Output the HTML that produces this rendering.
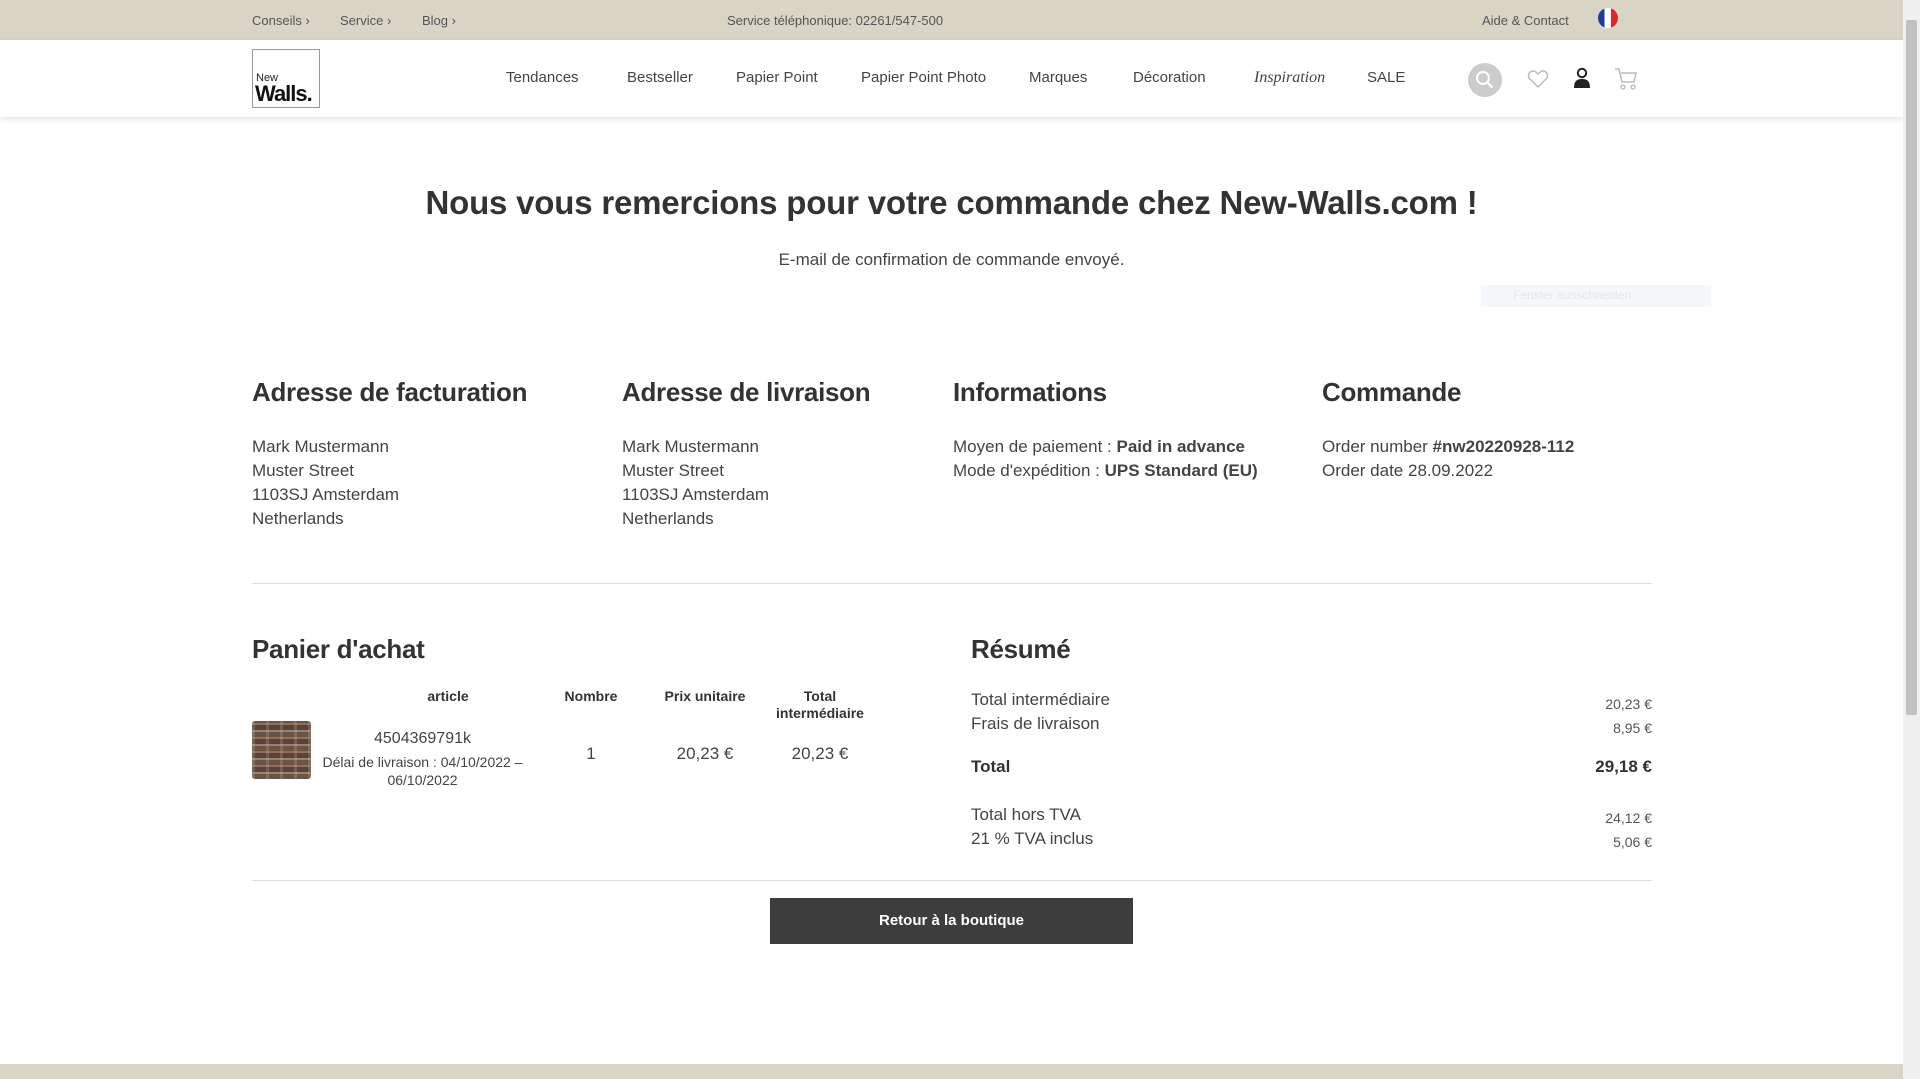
<!DOCTYPE html>
<html><head><meta charset="utf-8"><style>
*{margin:0;padding:0;box-sizing:border-box}
body{width:1920px;height:1079px;overflow:hidden;position:relative;background:#fff;font-family:"Liberation Sans",sans-serif;color:#333}
.a{position:absolute;white-space:nowrap}
.tb{position:absolute;left:0;top:0;width:1903px;height:40px;background:#d8d5c7}
.tb .a{font-size:13px;color:#555;top:13px}
.hd{position:absolute;left:0;top:40px;width:1903px;height:77px;background:#fff;box-shadow:0 2px 6px rgba(0,0,0,.12)}
.nav{font-size:15px;color:#444;top:69px}
.h2{font-size:26px;font-weight:bold;color:#333;letter-spacing:-0.3px}
.t{font-size:17px;color:#444;line-height:24px}
.th{font-size:14px;font-weight:bold;color:#333;text-align:center;line-height:17px}
.c{text-align:center}
.r{text-align:right}
.sb{position:absolute;left:1903px;top:0;width:17px;height:1079px;background:#f0f0f0}
</style></head><body>
<div class="tb">
<div class="a" style="left:252px">Conseils &#8250;</div>
<div class="a" style="left:340px">Service &#8250;</div>
<div class="a" style="left:422px">Blog &#8250;</div>
<div class="a" style="left:727px">Service téléphonique: 02261/547-500</div>
<div class="a" style="left:1482px">Aide &amp; Contact</div>
<div class="a" style="left:1598px;top:8px;width:20px;height:20px;border-radius:50%;overflow:hidden;background:linear-gradient(90deg,#1f3c9a 0 33%,#fff 33% 66%,#e0262b 66%)"></div>
</div>
<div class="hd"></div>
<div class="a" style="left:252px;top:49px;width:68px;height:59px;border:1px solid #999;background:#fff">
<div class="a" style="left:3px;top:22px;font-size:11px;color:#222">New</div>
<div class="a" style="left:2px;top:31px;font-size:22px;font-weight:bold;color:#111;letter-spacing:-1px">Walls.</div>
</div>
<div class="a nav" style="left:506px">Tendances</div>
<div class="a nav" style="left:627px">Bestseller</div>
<div class="a nav" style="left:736px">Papier Point</div>
<div class="a nav" style="left:861px">Papier Point Photo</div>
<div class="a nav" style="left:1029px">Marques</div>
<div class="a nav" style="left:1133px">Décoration</div>
<div class="a nav" style="left:1254px;font-family:'Liberation Serif',serif;font-style:italic;font-size:16px">Inspiration</div>
<div class="a nav" style="left:1367px">SALE</div>
<svg class="a" style="left:1467px;top:62px" width="36" height="36"><circle cx="18" cy="18" r="17" fill="#ccc"/><circle cx="16" cy="16" r="6" fill="none" stroke="#fff" stroke-width="2"/><path d="M20.5 20.5l5 5" stroke="#fff" stroke-width="2.2"/></svg>
<svg class="a" style="left:1527px;top:69px" width="22" height="20"><path d="M11 18L3 10C0 7 2 2 6 2c2.5 0 4 2 5 3 1-1 2.5-3 5-3 4 0 6 5 3 8z" fill="none" stroke="#bbb" stroke-width="1.5"/></svg>
<svg class="a" style="left:1572px;top:67px" width="20" height="22"><circle cx="10" cy="6" r="4.2" fill="none" stroke="#222" stroke-width="2"/><path d="M2 21c0-7 3-9 8-9s8 2 8 9z" fill="#222"/></svg>
<svg class="a" style="left:1614px;top:67px" width="26" height="24"><path d="M1 2h4l3 13h12l2-9H7" fill="none" stroke="#bbb" stroke-width="1.6"/><circle cx="9" cy="20" r="2" fill="none" stroke="#bbb" stroke-width="1.4"/><circle cx="19" cy="20" r="2" fill="none" stroke="#bbb" stroke-width="1.4"/></svg>

<div class="a c" style="left:0;width:1903px;top:184px;font-size:33px;font-weight:bold;color:#333;letter-spacing:-0.2px">Nous vous remercions pour votre commande chez New-Walls.com !</div>
<div class="a c t" style="left:0;width:1903px;top:248px">E-mail de confirmation de commande envoyé.</div>
<div class="a" style="left:1481px;top:285px;width:230px;height:22px;background:#f4f8fb"><span style="position:absolute;left:32px;top:3px;font-size:12px;color:#e6e6e6">Fenster ausschneiden</span></div>

<div class="a h2" style="left:252px;top:377px">Adresse de facturation</div>
<div class="a h2" style="left:622px;top:377px">Adresse de livraison</div>
<div class="a h2" style="left:953px;top:377px">Informations</div>
<div class="a h2" style="left:1322px;top:377px">Commande</div>
<div class="a t" style="left:252px;top:435px">Mark Mustermann<br>Muster Street<br>1103SJ Amsterdam<br>Netherlands</div>
<div class="a t" style="left:622px;top:435px">Mark Mustermann<br>Muster Street<br>1103SJ Amsterdam<br>Netherlands</div>
<div class="a t" style="left:953px;top:435px">Moyen de paiement : <b>Paid in advance</b><br>Mode d'expédition : <b>UPS Standard (EU)</b></div>
<div class="a t" style="left:1322px;top:435px">Order number <b>#nw20220928-112</b><br>Order date 28.09.2022</div>
<div class="a" style="left:252px;top:583px;width:1400px;height:1px;background:#ddd"></div>

<div class="a h2" style="left:252px;top:634px">Panier d'achat</div>
<div class="a h2" style="left:971px;top:634px">Résumé</div>
<div class="a th" style="left:368px;width:160px;top:688px">article</div>
<div class="a th" style="left:541px;width:100px;top:688px">Nombre</div>
<div class="a th" style="left:645px;width:120px;top:688px">Prix unitaire</div>
<div class="a th" style="left:760px;width:120px;top:688px">Total<br>intermédiaire</div>
<div class="a" style="left:252px;top:721px;width:59px;height:58px;border-radius:3px;background:repeating-linear-gradient(90deg,rgba(200,180,150,.25) 0 3px,transparent 3px 14px),repeating-linear-gradient(0deg,#6b5346 0 5px,#9a8270 5px 7px,#5a4238 7px 12px,#8f6f5e 12px 14px)"></div>
<div class="a c" style="left:310px;width:225px;top:730px;font-size:16px;color:#444">4504369791k</div>
<div class="a c" style="left:310px;width:225px;top:753px;font-size:14px;color:#444;line-height:18px;white-space:normal">Délai de livraison : 04/10/2022 –<br>06/10/2022</div>
<div class="a c t" style="left:541px;width:100px;top:742px">1</div>
<div class="a c t" style="left:645px;width:120px;top:742px">20,23 €</div>
<div class="a c t" style="left:760px;width:120px;top:742px">20,23 €</div>

<div class="a t" style="left:971px;top:688px">Total intermédiaire<br>Frais de livraison</div>
<div class="a r" style="left:1452px;width:200px;top:692px;font-size:14px;color:#555;line-height:24px">20,23 €<br>8,95 €</div>
<div class="a t" style="left:971px;top:755px;font-weight:bold;color:#333">Total</div>
<div class="a r t" style="left:1452px;width:200px;top:755px;font-weight:bold;color:#333">29,18 €</div>
<div class="a t" style="left:971px;top:803px">Total hors TVA<br>21 % TVA inclus</div>
<div class="a r" style="left:1452px;width:200px;top:806px;font-size:14px;color:#555;line-height:24px">24,12 €<br>5,06 €</div>
<div class="a" style="left:252px;top:880px;width:1400px;height:1px;background:#ddd"></div>
<div class="a c" style="left:770px;top:898px;width:363px;height:46px;background:#3d3d3d;color:#fff;font-weight:bold;font-size:15px;line-height:46px">Retour à la boutique</div>
<div class="a" style="left:0;top:1064px;width:1903px;height:15px;background:#d8d5c7"></div>
<div class="sb"><div style="position:absolute;left:3px;top:20px;width:11px;height:695px;background:#c1c1c1;border-radius:2px"></div></div>
</body></html>
